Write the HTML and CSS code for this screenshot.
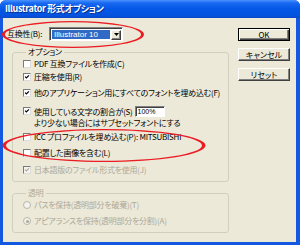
FILE: index.html
```html
<!DOCTYPE html>
<html lang="ja">
<head>
<meta charset="utf-8">
<title>Illustrator 形式オプション</title>
<link rel="stylesheet" href="styles.css">
</head>
<body>
<div class="window">
  <div class="titlebar"><span class="title">Illustrator 形式オプション</span></div>
  <div class="client">
    <div class="main">
      <div class="compat">
        <span class="lbl">互換性(B):</span>
        <div class="combo">
          <span class="combo-val">Illustrator 10</span>
          <span class="combo-btn"><svg width="5" height="3" viewBox="0 0 5 3"><path d="M0 0H5L2.5 3Z" fill="#000"/></svg></span>
        </div>
      </div>
      <fieldset class="group options">
        <legend>オプション</legend>
        <div class="row"><span class="cb"></span><span class="txt">PDF 互換ファイルを作成(C)</span></div>
        <div class="row"><span class="cb on"><svg viewBox="0 0 8 8"><path d="M1.5 3.5L3.2 5.3L6.6 1.8" /></svg></span><span class="txt">圧縮を使用(R)</span></div>
        <div class="row"><span class="cb on"><svg viewBox="0 0 8 8"><path d="M1.5 3.5L3.2 5.3L6.6 1.8" /></svg></span><span class="txt">他のアプリケーション用にすべてのフォントを埋め込む(F)</span></div>
        <div class="row multi">
          <span class="cb on"><svg viewBox="0 0 8 8"><path d="M1.5 3.5L3.2 5.3L6.6 1.8" /></svg></span>
          <div class="lines">
            <div class="line"><span class="txt">使用している文字の割合が(S)</span><span class="field">100%</span></div>
            <div class="line"><span class="txt">より少ない場合にはサブセットフォントにする</span></div>
          </div>
        </div>
        <div class="row"><span class="cb"></span><span class="txt">ICC プロファイルを埋め込む(P): MITSUBISHI</span></div>
        <div class="row"><span class="cb"></span><span class="txt">配置した画像を含む(L)</span></div>
        <div class="row dis"><span class="cb on"><svg viewBox="0 0 8 8"><path d="M1.5 3.5L3.2 5.3L6.6 1.8" /></svg></span><span class="txt">日本語版のファイル形式を使用(J)</span></div>
      </fieldset>
      <fieldset class="group transp dis">
        <legend>透明</legend>
        <div class="row"><span class="rb"></span><span class="txt">パスを保持(透明部分を破棄)(T)</span></div>
        <div class="row"><span class="rb on"></span><span class="txt">アピアランスを保持(透明部分を分割)(A)</span></div>
      </fieldset>
    </div>
    <div class="buttons">
      <button class="btn default">OK</button>
      <button class="btn">キャンセル</button>
      <button class="btn">リセット</button>
    </div>
  </div>
  <svg class="marks" width="300" height="245" viewBox="0 0 300 245">
    <path fill-rule="evenodd" fill="#EC1C24" d="M2 34.5a71 13.5 0 1 0 142 0a71 13.5 0 1 0 -142 0Z M5 34.5a68 12.2 0 1 0 136 0a68 12.2 0 1 0 -136 0Z"/>
    <path fill-rule="evenodd" fill="#EC1C24" d="M2.5 145.5a101.5 16.5 0 1 0 203 0a101.5 16.5 0 1 0 -203 0Z M6 145.5a98 15.2 0 1 0 196 0a98 15.2 0 1 0 -196 0Z"/>
  </svg>
</div>
</body>
</html>
```
FILE: styles.css
```css
html, body {
  margin: 0;
  padding: 0;
  background: #ffffff;
}
body {
  width: 300px;
  height: 245px;
  overflow: hidden;
  font-family: "Noto Sans CJK JP", "Liberation Sans", sans-serif;
  font-size: 8px;
  color: #000;
  font-feature-settings: "palt";
  letter-spacing: -0.25px;
}
.window {
  position: relative;
  width: 300px;
  height: 245px;
  box-sizing: border-box;
  background: #1458E2;
  border-radius: 6px 6px 0 0;
  display: flex;
  flex-direction: column;
  overflow: hidden;
}
.titlebar {
  height: 18px;
  flex: none;
  display: flex;
  align-items: center;
  padding-left: 5px;
  background: linear-gradient(#4A92FF 0%, #1767F0 18%, #0457E6 50%, #0453E0 85%, #0A48C8 100%);
}
.title {
  color: #fff;
  font-weight: bold;
  font-size: 9px;
  line-height: 10px;
  letter-spacing: -0.35px;
  text-shadow: 1px 1px 0 #0A2E8C;
}
.client {
  flex: 1;
  margin: 0 4px 3px 3px;
  background: #ECE9D8;
  display: flex;
}
.main {
  width: 226px;
  padding-left: 4px;
  box-sizing: border-box;
  display: flex;
  flex-direction: column;
}
.compat {
  margin-top: 9px;
  height: 14px;
  display: flex;
  align-items: center;
}
.lbl {
  width: 42px;
  line-height: 10px;
}
.combo {
  width: 74px;
  height: 14px;
  box-sizing: border-box;
  background: #fff;
  border: 1px solid;
  border-color: #808080 #fff #fff #808080;
  box-shadow: inset 1px 1px 0 #404040;
  display: flex;
  align-items: center;
  padding: 2px 1px 1px 2px;
}
.combo-val {
  flex: 1;
  height: 9px;
  background: #316AC5;
  color: #fff;
  font-family: "Liberation Sans", sans-serif;
  font-size: 8px;
  line-height: 9px;
  letter-spacing: 0;
  padding-left: 2px;
}
.combo-btn {
  width: 10px;
  height: 10px;
  margin-left: 1px;
  box-sizing: border-box;
  background: #ECE9D8;
  border: 1px solid;
  border-color: #fff #404040 #404040 #fff;
  box-shadow: inset -1px -1px 0 #808080;
  display: flex;
  align-items: center;
  justify-content: center;
}
.group {
  margin: 6px 0 0 5px;
  width: 217px;
  box-sizing: border-box;
  border: 1px solid #D0D0BF;
  border-radius: 3px;
  padding: 0 0 6px 10px;
}
.group legend {
  padding: 0 2px;
  margin-left: 3px;
  line-height: 10px;
  height: 10px;
}
.row {
  display: flex;
  align-items: center;
  height: 10px;
  line-height: 10px;
}
.row .txt {
  margin-left: 3px;
  white-space: nowrap;
}
.options .row:nth-of-type(1) { margin-top: 2px; }
.options .row:nth-of-type(2) { margin-top: 3px; }
.options .row:nth-of-type(3) { margin-top: 6px; }
.options .row:nth-of-type(4) { margin-top: 8px; }
.options .row:nth-of-type(5) { margin-top: 4px; }
.options .row:nth-of-type(6) { margin-top: 6px; }
.options .row:nth-of-type(7) { margin-top: 7px; }
.row.multi {
  height: 22px;
  align-items: flex-start;
}
.row.multi .cb { margin-top: 1px; }
.lines {
  display: flex;
  flex-direction: column;
}
.line {
  display: flex;
  align-items: center;
  height: 11px;
}
.field {
  width: 30px;
  height: 11px;
  box-sizing: border-box;
  margin-left: 2px;
  background: #fff;
  border: 1px solid;
  border-color: #808080 #fff #fff #808080;
  box-shadow: inset 1px 1px 0 #404040;
  font-family: "Liberation Sans", sans-serif;
  font-size: 7px;
  line-height: 9px;
  letter-spacing: 0;
  padding-left: 2px;
}
.cb {
  width: 8px;
  height: 8px;
  flex: none;
  box-sizing: border-box;
  background: #fff;
  border: 1px solid;
  border-color: #7A7A7A #DCDCDC #DCDCDC #7A7A7A;
  display: flex;
}
.cb svg {
  width: 6px;
  height: 6px;
}
.cb svg path {
  fill: none;
  stroke: #000;
  stroke-width: 1.6;
}
.dis .txt, .dis legend { color: #ACA899; }
.dis .cb { background: #F4F3EE; }
.dis .cb svg path { stroke: #ACA899; }
.transp .row:nth-of-type(1) { margin-top: 2px; }
.transp .row:nth-of-type(2) { margin-top: 6px; }
.rb {
  width: 8px;
  height: 8px;
  flex: none;
  box-sizing: border-box;
  border-radius: 50%;
  border: 1px solid #B8B6A8;
  background: #F4F3EE;
  display: flex;
  align-items: center;
  justify-content: center;
}
.rb.on::after {
  content: "";
  width: 3px;
  height: 3px;
  border-radius: 50%;
  background: #ACA899;
}
.buttons {
  margin-left: 9px;
  padding-top: 10px;
  width: 52px;
  display: flex;
  flex-direction: column;
  gap: 7px;
}
.btn {
  height: 13px;
  width: 52px;
  margin: 0;
  padding: 0;
  box-sizing: border-box;
  background: #ECE9D8;
  border: 1px solid;
  border-color: #fff #404040 #404040 #fff;
  box-shadow: inset -1px -1px 0 #808080;
  font-family: "Noto Sans CJK JP", "Liberation Sans", sans-serif;
  font-feature-settings: "palt";
  font-size: 8px;
  line-height: 10px;
  color: #000;
}
.btn.default {
  border: 1px solid #000;
  box-shadow: inset 1px 1px 0 #fff, inset -1px -1px 0 #404040, inset -2px -2px 0 #808080;
}
.marks {
  position: absolute;
  left: 0;
  top: 0;
  pointer-events: none;
}
```
